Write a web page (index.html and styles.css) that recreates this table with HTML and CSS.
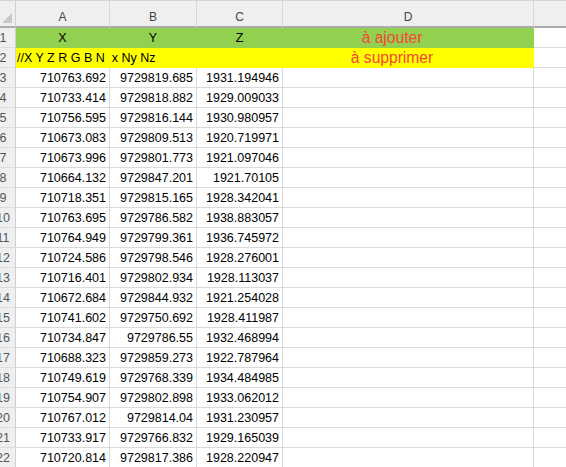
FILE: index.html
```html
<!DOCTYPE html>
<html>
<head>
<meta charset="utf-8">
<link rel="stylesheet" href="styles.css">
</head>
<body>
<div class="sheet">
  <div class="corner"><span class="tri"></span></div>
  <div class="colhead">A</div>
  <div class="colhead">B</div>
  <div class="colhead">C</div>
  <div class="colhead">D</div>
  <div class="colhead last"></div>

  <div class="rowhead"><span>1</span></div>
  <div class="cell green center">X</div>
  <div class="cell green center">Y</div>
  <div class="cell green center">Z</div>
  <div class="cell green note">à ajouter</div>
  <div class="cell"></div>

  <div class="rowhead"><span>2</span></div>
  <div class="cell yellow wide">//X Y Z R G B N  x Ny Nz</div>
  <div class="cell yellow"></div>
  <div class="cell yellow note">à supprimer</div>
  <div class="cell"></div>

  <div class="rowhead"><span>3</span></div><div class="cell num">710763.692</div><div class="cell num">9729819.685</div><div class="cell num">1931.194946</div><div class="cell"></div><div class="cell"></div>
  <div class="rowhead"><span>4</span></div><div class="cell num">710733.414</div><div class="cell num">9729818.882</div><div class="cell num">1929.009033</div><div class="cell"></div><div class="cell"></div>
  <div class="rowhead"><span>5</span></div><div class="cell num">710756.595</div><div class="cell num">9729816.144</div><div class="cell num">1930.980957</div><div class="cell"></div><div class="cell"></div>
  <div class="rowhead"><span>6</span></div><div class="cell num">710673.083</div><div class="cell num">9729809.513</div><div class="cell num">1920.719971</div><div class="cell"></div><div class="cell"></div>
  <div class="rowhead"><span>7</span></div><div class="cell num">710673.996</div><div class="cell num">9729801.773</div><div class="cell num">1921.097046</div><div class="cell"></div><div class="cell"></div>
  <div class="rowhead"><span>8</span></div><div class="cell num">710664.132</div><div class="cell num">9729847.201</div><div class="cell num">1921.70105</div><div class="cell"></div><div class="cell"></div>
  <div class="rowhead"><span>9</span></div><div class="cell num">710718.351</div><div class="cell num">9729815.165</div><div class="cell num">1928.342041</div><div class="cell"></div><div class="cell"></div>
  <div class="rowhead"><span>10</span></div><div class="cell num">710763.695</div><div class="cell num">9729786.582</div><div class="cell num">1938.883057</div><div class="cell"></div><div class="cell"></div>
  <div class="rowhead"><span>11</span></div><div class="cell num">710764.949</div><div class="cell num">9729799.361</div><div class="cell num">1936.745972</div><div class="cell"></div><div class="cell"></div>
  <div class="rowhead"><span>12</span></div><div class="cell num">710724.586</div><div class="cell num">9729798.546</div><div class="cell num">1928.276001</div><div class="cell"></div><div class="cell"></div>
  <div class="rowhead"><span>13</span></div><div class="cell num">710716.401</div><div class="cell num">9729802.934</div><div class="cell num">1928.113037</div><div class="cell"></div><div class="cell"></div>
  <div class="rowhead"><span>14</span></div><div class="cell num">710672.684</div><div class="cell num">9729844.932</div><div class="cell num">1921.254028</div><div class="cell"></div><div class="cell"></div>
  <div class="rowhead"><span>15</span></div><div class="cell num">710741.602</div><div class="cell num">9729750.692</div><div class="cell num">1928.411987</div><div class="cell"></div><div class="cell"></div>
  <div class="rowhead"><span>16</span></div><div class="cell num">710734.847</div><div class="cell num">9729786.55</div><div class="cell num">1932.468994</div><div class="cell"></div><div class="cell"></div>
  <div class="rowhead"><span>17</span></div><div class="cell num">710688.323</div><div class="cell num">9729859.273</div><div class="cell num">1922.787964</div><div class="cell"></div><div class="cell"></div>
  <div class="rowhead"><span>18</span></div><div class="cell num">710749.619</div><div class="cell num">9729768.339</div><div class="cell num">1934.484985</div><div class="cell"></div><div class="cell"></div>
  <div class="rowhead"><span>19</span></div><div class="cell num">710754.907</div><div class="cell num">9729802.898</div><div class="cell num">1933.062012</div><div class="cell"></div><div class="cell"></div>
  <div class="rowhead"><span>20</span></div><div class="cell num">710767.012</div><div class="cell num">9729814.04</div><div class="cell num">1931.230957</div><div class="cell"></div><div class="cell"></div>
  <div class="rowhead"><span>21</span></div><div class="cell num">710733.917</div><div class="cell num">9729766.832</div><div class="cell num">1929.165039</div><div class="cell"></div><div class="cell"></div>
  <div class="rowhead"><span>22</span></div><div class="cell num">710720.814</div><div class="cell num">9729817.386</div><div class="cell num">1928.220947</div><div class="cell"></div><div class="cell"></div>
</div>
</body>
</html>
```
FILE: styles.css
```css
html, body {
  margin: 0;
  padding: 0;
  background: #ffffff;
  overflow: hidden;
}
.sheet {
  display: grid;
  grid-template-columns: 16px 94px 87px 86px 251px 40px;
  grid-template-rows: 27px repeat(22, 20px);
  font-family: "Liberation Sans", Arial, sans-serif;
  font-size: 12.5px;
  color: #000;
  border-top: 1px solid #d4d4d4;
  width: 566px;
}
.corner {
  background: #efefef;
  border-right: 1px solid #d0d0d0;
  border-bottom: 2px solid #acacac;
  position: relative;
  box-sizing: border-box;
}
.tri {
  position: absolute;
  right: 3px;
  bottom: 3px;
  width: 0;
  height: 0;
  border-left: 10px solid transparent;
  border-bottom: 10px solid #c9c9c9;
}
.colhead {
  background: #efefef;
  border-right: 1px solid #d8d8d8;
  border-bottom: 2px solid #acacac;
  box-sizing: border-box;
  display: flex;
  align-items: center;
  justify-content: center;
  color: #444;
  font-size: 12px;
  padding-top: 7px;
}
.colhead.last {
  border-right: none;
}
.rowhead {
  background: #efefef;
  border-right: 1px solid #cfcfcf;
  border-bottom: 1px solid #dcdcdc;
  box-sizing: border-box;
  overflow: hidden;
  color: #555;
  font-size: 12.5px;
  display: flex;
  align-items: center;
}
.rowhead span {
  flex: none;
  width: 34px;
  margin-left: -14px;
  text-align: center;
}
.cell {
  border-right: 1px solid #dadada;
  border-bottom: 1px solid #dadada;
  box-sizing: border-box;
  display: flex;
  align-items: center;
  white-space: pre;
  overflow: visible;
}
.center {
  justify-content: center;
}
.num {
  justify-content: flex-end;
  padding-right: 3px;
}
.green {
  background: #92d050;
  border-color: #92d050;
}
.yellow {
  background: #ffff00;
  border-color: #ffff00;
}
.wide {
  grid-column: span 2;
  padding-left: 1px;
}
.note {
  justify-content: center;
  padding-right: 32px;
  color: #f4473a;
  font-size: 15.6px;
}
```
